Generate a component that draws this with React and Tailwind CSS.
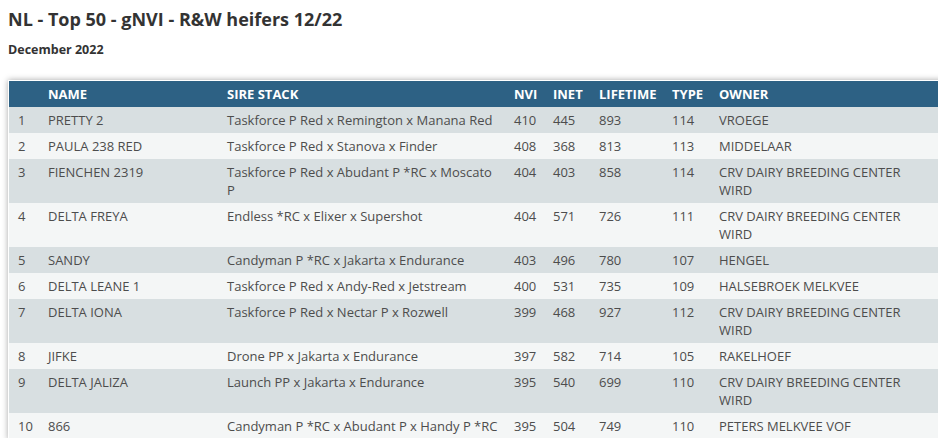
import React from "react";

const CRV = ["CRV DAIRY BREEDING CENTER", "WIRD"];

const rows = [
  ["1", "PRETTY 2", "Taskforce P Red x Remington x Manana Red", "410", "445", "893", "114", "VROEGE"],
  ["2", "PAULA 238 RED", "Taskforce P Red x Stanova x Finder", "408", "368", "813", "113", "MIDDELAAR"],
  ["3", "FIENCHEN 2319", ["Taskforce P Red x Abudant P *RC x Moscato", "P"], "404", "403", "858", "114", CRV],
  ["4", "DELTA FREYA", "Endless *RC x Elixer x Supershot", "404", "571", "726", "111", CRV],
  ["5", "SANDY", "Candyman P *RC x Jakarta x Endurance", "403", "496", "780", "107", "HENGEL"],
  ["6", "DELTA LEANE 1", "Taskforce P Red x Andy-Red x Jetstream", "400", "531", "735", "109", "HALSEBROEK MELKVEE"],
  ["7", "DELTA IONA", "Taskforce P Red x Nectar P x Rozwell", "399", "468", "927", "112", CRV],
  ["8", "JIFKE", "Drone PP x Jakarta x Endurance", "397", "582", "714", "105", "RAKELHOEF"],
  ["9", "DELTA JALIZA", "Launch PP x Jakarta x Endurance", "395", "540", "699", "110", CRV],
  ["10", "866", "Candyman P *RC x Abudant P x Handy P *RC", "395", "504", "749", "110", "PETERS MELKVEE VOF"],
];

const headers = ["", "NAME", "SIRE STACK", "NVI", "INET", "LIFETIME", "TYPE", "OWNER"];
const widths = ["w-[34px]", "w-[179px]", "w-[287px]", "w-[39px]", "w-[46px]", "w-[73px]", "w-[47px]", "w-[230px]"];

function Cell({ value }) {
  if (Array.isArray(value)) {
    return (
      <>
        {value.map((line, i) => (
          <span key={i} className="block whitespace-nowrap">
            {line}
          </span>
        ))}
      </>
    );
  }
  return <span className="whitespace-nowrap">{value}</span>;
}

export default function App() {
  return (
    <div className="w-full overflow-hidden bg-white font-['Open_Sans',sans-serif] text-[#333]">
      <div className="pl-2 pt-[5px]">
        <h1 className="text-[18px] leading-[28px] font-bold text-[#333]">NL - Top 50 - gNVI - R&amp;W heifers 12/22</h1>
        <p className="mt-[8px] text-[12.5px] leading-[18px] font-bold text-[#333]">December 2022</p>
        <div className="mt-[21px] w-[937px] border border-white shadow-[0_0_6px_rgba(0,0,0,0.35)]">
          <table className="table-fixed border-collapse w-[935px] text-[13px] leading-[18px]">
            <colgroup>
              {widths.map((w, i) => (
                <col key={i} className={w} />
              ))}
            </colgroup>
            <thead>
              <tr className="bg-[#2d6184] text-white">
                {headers.map((h, i) => (
                  <th
                    key={i}
                    className={`text-left align-top font-bold py-[4px] pr-[5px] ${i === 0 ? "pl-[9px]" : "pl-[5px]"}`}
                  >
                    {h}
                  </th>
                ))}
              </tr>
            </thead>
            <tbody>
              {rows.map((r, ri) => (
                <tr key={ri} className={ri % 2 === 0 ? "bg-[#d8dfe1]" : "bg-[#f4f6f6]"}>
                  {r.map((c, ci) => (
                    <td
                      key={ci}
                      className={`align-top text-[#4d4d4d] py-[4px] pr-[5px] ${ci === 0 ? "pl-[9px]" : "pl-[5px]"}`}
                    >
                      <Cell value={c} />
                    </td>
                  ))}
                </tr>
              ))}
            </tbody>
          </table>
        </div>
      </div>
    </div>
  );
}
